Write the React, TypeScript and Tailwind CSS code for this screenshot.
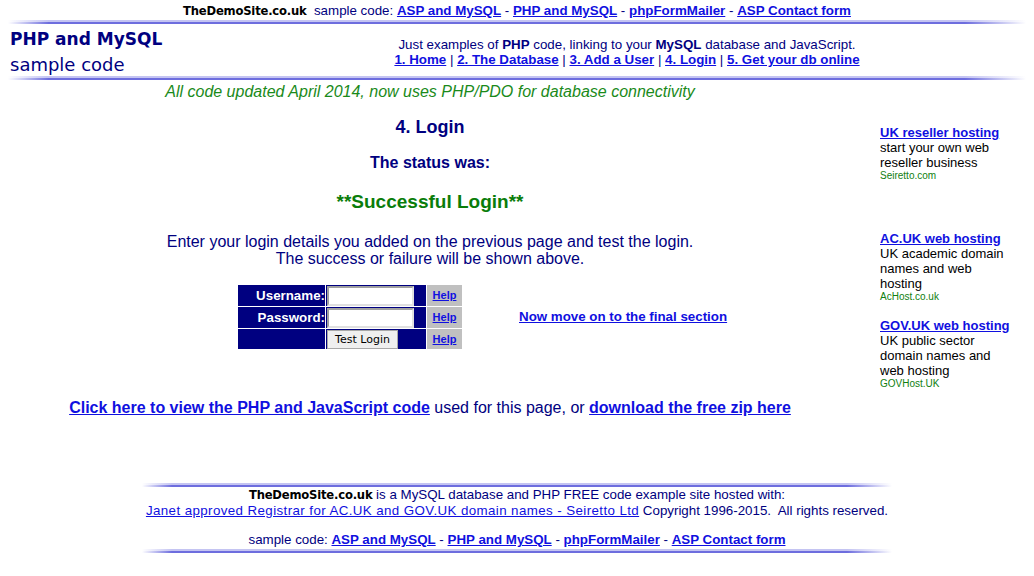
import React from 'react';

const Rule: React.FC<{ className?: string }> = ({ className }) => (
  <div className={className}>
    <div className="h-[2px] bg-[linear-gradient(to_right,transparent,#c4c4f2_4%,#c4c4f2_94%,transparent)]" />
    <div className="h-[2px] bg-[linear-gradient(to_right,transparent,#6d6dde_4%,#6d6dde_94%,transparent)]" />
  </div>
);

const A: React.FC<{ children: React.ReactNode; className?: string }> = ({ children, className }) => (
  <a href="#" className={`text-[#1010e0] underline ${className ?? 'font-bold'}`}>{children}</a>
);

const SampleLinks: React.FC = () => (
  <>
    sample code: <A>ASP and MySQL</A> - <A>PHP and MySQL</A> - <A>phpFormMailer</A> - <A>ASP Contact form</A>
  </>
);

const Logo: React.FC = () => (
  <span className="font-['Comic_Sans_MS','DejaVu_Sans',sans-serif] font-bold text-black text-[11.6px] tracking-[-0.2px]">TheDemoSite.co.uk</span>
);

const App: React.FC = () => {
  const ads = [
    { title: "UK reseller hosting", lines: "start your own web reseller business", site: "Seiretto.com", mt: "mt-[45px]" },
    { title: "AC.UK web hosting", lines: "UK academic domain names and web hosting", site: "AcHost.co.uk", mt: "mt-[49px]" },
    { title: "GOV.UK web hosting", lines: "UK public sector domain names and web hosting", site: "GOVHost.UK", mt: "mt-[15px]" },
  ];

  return (
    <div className="w-[1034px] h-[576px] bg-white font-['Liberation_Sans',Arial,sans-serif] text-[#000080] overflow-hidden">
      {/* top strip */}
      <div className="pt-[3px] text-center text-[13.33px] leading-[15px]">
        <Logo />&nbsp; <SampleLinks />
      </div>
      <Rule className="mx-[8px] mt-[1px]" />

      {/* header */}
      <div className="flex h-[52px]">
        <div className="w-[220px] pl-[10px] pt-[2px] font-['Comic_Sans_MS','DejaVu_Sans',sans-serif] text-[#000080]">
          <div className="text-[17px] leading-[26px] font-bold">PHP and MySQL</div>
          <div className="text-[18px] leading-[26px]">sample code</div>
        </div>
        <div className="flex-1 text-center text-[13.33px] leading-[15px] pt-[13px]">
          <div>Just examples of <b>PHP</b> code, linking to your <b>MySQL</b> database and JavaScript.</div>
          <div>
            <A>1. Home</A> | <A>2. The Database</A> | <A>3. Add a User</A> | <A>4. Login</A> | <A>5. Get your db online</A>
          </div>
        </div>
      </div>
      <Rule className="mx-[8px]" />

      <div className="flex">
        {/* main column */}
        <div className="w-[860px] text-center">
          <div className="mt-[2px] italic text-[16px] leading-[20px] text-[#1a8a1a]">
            All code updated April 2014, now uses PHP/PDO for database connectivity
          </div>
          <h1 className="mt-[14px] text-[18px] leading-[22px] font-bold">4. Login</h1>
          <div className="mt-[15px] text-[16px] leading-[20px] font-bold">The status was:</div>
          <div className="mt-[17px] text-[19px] leading-[24px] font-bold text-[#0a7d0a]">**Successful Login**</div>
          <p className="mt-[19px] text-[16px] leading-[17px]">
            Enter your login details you added on the previous page and test the login.<br />
            The success or failure will be shown above.
          </p>

          <div className="mt-[18px] flex items-center pl-[238px]">
            <div className="grid grid-cols-[87px_100px_35px] grid-rows-[21px_21px_20px] gap-[1px] bg-white text-left">
              <div className="bg-[#000080] text-white font-bold text-[13.33px] flex items-center justify-end">Username:</div>
              <div className="bg-[#000080] flex items-center pl-[1px]">
                <div className="w-[87px] h-[20px] bg-white border-2 border-[#a0a0a0] border-r-[#e0e0e0] border-b-[#e0e0e0]" />
              </div>
              <div className="bg-[#c0c0c0] flex items-center justify-center text-[11px]"><A>Help</A></div>

              <div className="bg-[#000080] text-white font-bold text-[13.33px] flex items-center justify-end">Password:</div>
              <div className="bg-[#000080] flex items-center pl-[1px]">
                <div className="w-[87px] h-[20px] bg-white border-2 border-[#a0a0a0] border-r-[#e0e0e0] border-b-[#e0e0e0]" />
              </div>
              <div className="bg-[#c0c0c0] flex items-center justify-center text-[11px]"><A>Help</A></div>

              <div className="bg-[#000080]" />
              <div className="bg-[#000080] flex items-center pl-[1px]">
                <button className="w-[71px] h-[19px] bg-[#efefef] border border-[#a8a8a8] text-black text-[11px] font-['DejaVu_Sans',sans-serif] leading-none">Test Login</button>
              </div>
              <div className="bg-[#c0c0c0] flex items-center justify-center text-[11px]"><A>Help</A></div>
            </div>
            <div className="ml-[57px] text-[13.33px]"><A>Now move on to the final section</A></div>
          </div>

          <div className="mt-[49px] text-[16px] leading-[20px]">
            <A>Click here to view the PHP and JavaScript code</A> used for this page, or <A>download the free zip here</A>
          </div>
        </div>

        {/* sidebar */}
        <div className="w-[134px] ml-[20px] text-[13px] leading-[15px] text-black">
          {ads.map((ad, i) => (
            <div key={i} className={ad.mt}>
              <div><A>{ad.title}</A></div>
              <div>{ad.lines}</div>
              <div className="text-[10px] leading-[12px] text-[#108010]">{ad.site}</div>
            </div>
          ))}
        </div>
      </div>

      {/* footer */}
      <Rule className="w-[750px] mx-auto mt-[65px]" />
      <div className="text-center text-[13.33px] leading-[16px]">
        <Logo /> is a MySQL database and PHP FREE code example site hosted with:<br />
        <A className="font-normal tracking-[0.4px]">Janet approved Registrar for AC.UK and GOV.UK domain names - Seiretto Ltd</A> Copyright 1996-2015.&nbsp; All rights reserved.
        <div className="mt-[13px]"><SampleLinks /></div>
      </div>
      <Rule className="w-[750px] mx-auto mt-[1px]" />
    </div>
  );
};

export default App;
